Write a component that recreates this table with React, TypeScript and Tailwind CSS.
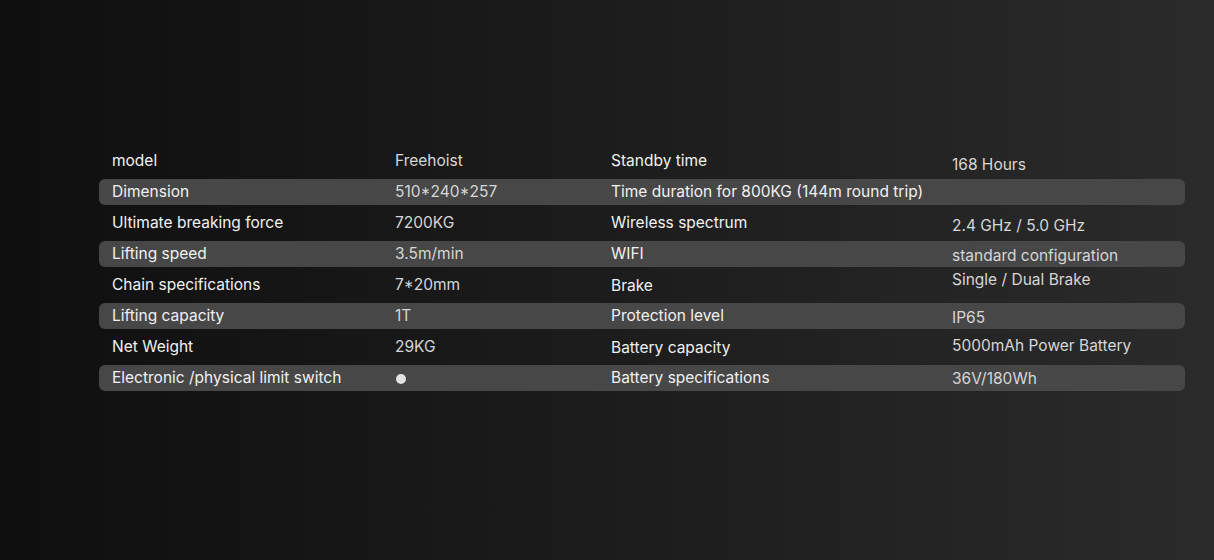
type Cell = { text: string; cls?: string }
type Row = { a: string; b: Cell; c: Cell; d: Cell; striped?: boolean }

// spec rows, two label/value pairs per line; cls nudges a cell the way the source image has it
const rows: Row[] = [
    { a: 'model', b: { text: 'Freehoist' }, c: { text: 'Standby time' }, d: { text: '168 Hours', cls: 'translate-y-[4px]' } },
    { a: 'Dimension', b: { text: '510*240*257' }, c: { text: 'Time duration for 800KG (144m round trip)' }, d: { text: '' }, striped: true },
    { a: 'Ultimate breaking force', b: { text: '7200KG' }, c: { text: 'Wireless spectrum' }, d: { text: '2.4 GHz / 5.0 GHz', cls: 'translate-y-[3px]' } },
    { a: 'Lifting speed', b: { text: '3.5m/min' }, c: { text: 'WIFI' }, d: { text: 'standard configuration', cls: 'translate-y-[2px]' }, striped: true },
    { a: 'Chain specifications', b: { text: '7*20mm' }, c: { text: 'Brake', cls: 'translate-y-[1px]' }, d: { text: 'Single / Dual Brake', cls: '-translate-y-[5px]' } },
    { a: 'Lifting capacity', b: { text: '1T' }, c: { text: 'Protection level' }, d: { text: 'IP65', cls: 'translate-y-[2px]' }, striped: true },
    { a: 'Net Weight', b: { text: '29KG' }, c: { text: 'Battery capacity', cls: 'translate-y-[1px]' }, d: { text: '5000mAh Power Battery', cls: '-translate-y-[1px]' } },
    { a: 'Electronic /physical limit switch', b: { text: '' }, c: { text: 'Battery specifications' }, d: { text: '36V/180Wh', cls: 'translate-y-[1px]' }, striped: true },
]

function SpecRow({ row, index }: { row: Row; index: number }) {
    const isSwitch = index === rows.length - 1
    return (
        <div className="h-[31px] flex items-center">
            <div className={`h-[26px] w-full flex items-center rounded-[6px] ${row.striped ? 'bg-[#474747]' : ''}`}>
                <div className="w-[296px] pl-[13px] text-[#f1f1f1] whitespace-nowrap">{row.a}</div>
                <div className="w-[216px] text-[#d6d6d6]">
                    {isSwitch ? (
                        <span className="block w-[10px] h-[10px] rounded-full bg-[#e2e2e2] ml-[1px] translate-y-[1px]" />
                    ) : (
                        row.b.text
                    )}
                </div>
                <div className={`w-[341px] text-[#f1f1f1] whitespace-nowrap ${row.c.cls ?? ''}`}>{row.c.text}</div>
                <div className={`flex-1 text-[#d6d6d6] whitespace-nowrap ${row.d.cls ?? ''}`}>{row.d.text}</div>
            </div>
        </div>
    )
}

export default function App() {
    return (
        <div
            className="w-[1214px] h-[560px] overflow-hidden bg-gradient-to-r from-[#0f0f0f] via-[#1c1c1c] to-[#2b2b2b] pt-[145px] pl-[99px] pr-[29px]"
            style={{ fontFamily: 'Inter, "Noto Sans", sans-serif' }}
        >
            <div className="text-[15.5px] leading-none">
                {rows.map((r, i) => (
                    <SpecRow key={r.a} row={r} index={i} />
                ))}
            </div>
        </div>
    )
}
